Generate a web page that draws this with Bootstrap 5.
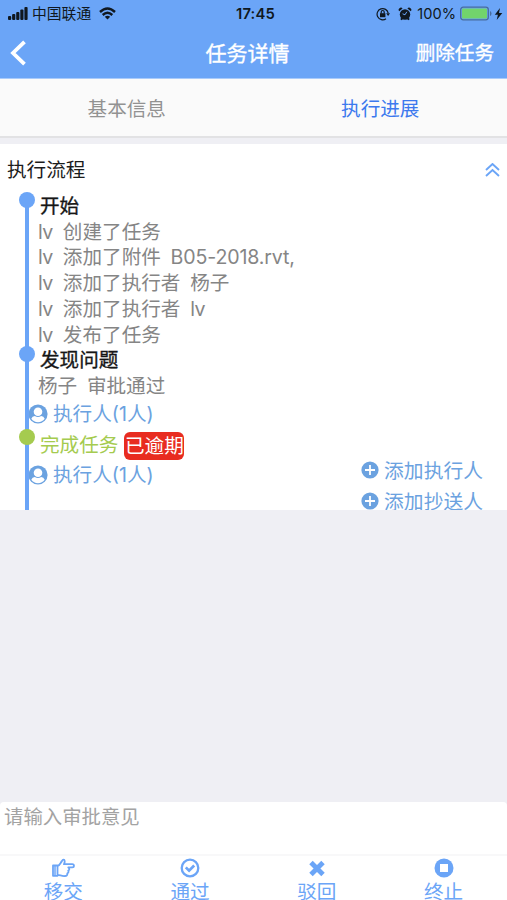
<!DOCTYPE html>
<html lang="zh-CN">
<head>
<meta charset="utf-8">
<meta name="viewport" content="width=device-width, initial-scale=1">
<title>任务详情</title>
<link href="https://cdn.jsdelivr.net/npm/bootstrap@5.3.0/dist/css/bootstrap.min.css" rel="stylesheet">
<style>
  body { font-family: Inter, "Noto Sans CJK SC", sans-serif; font-size: 19.6px; background: #efeff4; height: 900px; overflow: hidden; color: #1c1c1c; }
  svg { display: block; flex: none; }
  .app { height: 900px; }
  .top { background: #6ba5f7; height: 79px; border-bottom: 1px solid #a9cbfb; }
  .status { height: 27px; color: #101820; font-size: 14.8px; line-height: 27px; padding: 0 4px 0 8px; }
  .status > div, .titlebar > div { flex: 1 1 0; }
  .status .clock { padding-top: 2px; letter-spacing: .2px; }
  .carrier { padding-top: 2px; margin-left: 4px; }
  .charge { font-size: 14.6px; margin-left: 5px; padding-top: 1px; }
  .titlebar { height: 51px; line-height: 51px; color: #fff; padding: 1px 13px 0 10px; }
  .titlebar h1 { font-size: 21px; line-height: 51px; font-weight: 400; margin: 0 0 0 -9px; }
  .titlebar, .step { -webkit-text-stroke: .35px currentColor; }
  .tabs { height: 59px; background: #fafafa; border-bottom: 2px solid #e2e2e4; line-height: 59px; color: #929292; }
  .tabs div { padding-top: 1px; }
  .tabs .on { color: #3c79ee; }
  .flow { margin-top: 6px; height: 366px; background: #fff; overflow: hidden; }
  .flow-head { height: 50px; line-height: 50px; padding: 1px 7px 0; }
  .track { padding-left: 38px; line-height: 25.7px; color: #858585; height: 316px; }
  .rail { left: 24.5px; top: 6px; bottom: 0; width: 4px; background: #6ba5f7; }
  .step { color: #161616; padding-left: 2px; }
  .dot { left: -19px; top: -2px; width: 16px; height: 16px; border-radius: 50%; background: #6ba5f7; }
  .green { color: #a5cb4f; height: 31px; padding-top: 2px; -webkit-text-stroke: 0; }
  .green .dot { background: #a5cb4f; top: -1px; }
  .late { background: #e82c20; color: #fff; border-radius: 6px; height: 28px; line-height: 28px; width: 60px; margin-left: 6px; margin-top: -1px; }
  .person { color: #6ba2e0; margin-left: -10px; gap: 5px; height: 30px; }
  .person svg { margin-top: -2px; }
  .adds { right: 24px; top: 261.5px; color: #6ba2e0; line-height: 31px; font-size: 19.8px; }
  .adds svg { margin: -2px 5px 0 0; }
  .line { white-space: pre; word-spacing: 4.2px; }
  .lat { letter-spacing: -.15px; }
  .v { letter-spacing: -.5px; margin-right: .3px; }
  .entry { height: 52px; background: #fff; color: #a3a3a3; line-height: 30px; padding-left: 4px; border-radius: 4px 4px 0 0; font-size: 19.4px; }
  .actions { height: 46px; background: #fff; border-top: 2px solid #f8f8f9; color: #6ba5f7; overflow: hidden; line-height: 28px; }
  .actions svg { margin-top: 2px; }
</style>
</head>
<body>
<div class="app d-flex flex-column">
  <header class="top flex-shrink-0">
    <div class="status d-flex align-items-center">
      <div class="d-flex align-items-center">
        <svg width="20" height="13" viewBox="0 0 20 13" fill="#101820"><rect y="9" width="3.2" height="4" rx="1"/><rect x="4.1" y="7" width="3.2" height="6" rx="1"/><rect x="8.2" y="5" width="3.2" height="8" rx="1"/><rect x="12.3" y="2.5" width="3.2" height="10.500" rx="1"/><rect x="16.400" width="3.2" height="13" rx="1"/></svg>
        <span class="carrier">中国联通</span>
        <svg class="ms-2" width="17" height="13" viewBox="0 0 17 13" fill="none" stroke="#101820" stroke-width="2.4"><path d="M1 5Q8.500-2 16 5M3.700 8Q8.500 3.600 13.300 8"/><path d="M8.500 12.500 5.800 9.800Q8.500 7.600 11.200 9.800z" fill="#101820" stroke="none"/></svg>
      </div>
      <span class="clock fw-semibold">17:45</span>
      <div class="d-flex align-items-center justify-content-end">
        <svg width="14" height="14" viewBox="0 0 14 14" fill="none" stroke="#101820" stroke-width="1.200"><path d="M10 11.700A5.600 5.600 0 1 1 12.200 6.200"/><path d="M10.200 6.200h3.800l-1.900 2.900z" fill="#101820" stroke="none"/><rect x="4" y="6.200" width="5.400" height="4" fill="#101820" stroke="none"/><path d="M5.200 6.500V5a1.500 1.500 0 0 1 3 0v1.500"/></svg>
        <svg class="ms-2" width="14" height="14" viewBox="0 0 14 14"><g fill="#101820"><circle cx="7" cy="7.500" r="5.200"/><path d="M1.200 4.300A2 2 0 0 1 4.600 1.500zM12.800 4.300A2 2 0 0 0 9.400 1.500z"/><path d="m3 10 2 2-1.300 1.300-1.200-.8zM11 10l-2 2 1.300 1.300 1.200-.8z"/></g><path d="m8.800 4.800-1.800 3-2.400-1" fill="none" stroke="#6ba5f7"/></svg>
        <span class="charge">100%</span>
        <svg class="ms-1" width="32" height="15" viewBox="0 0 32 15"><rect x=".7" y="1.200" width="27.600" height="12.600" rx="2.500" fill="none" stroke="#486c9e" stroke-width="1.300"/><rect x="2" y="2.500" width="25" height="10" rx="1" fill="#72d46c"/><path d="M30 5v5q1.500-.5 1.500-2.500T30 5" fill="#486c9e"/></svg>
        <svg style="margin-left:2px" width="9" height="12" viewBox="0 0 9 12"><path d="M6 0 .8 6.800h3.100L2.700 12 8.300 4.900H5z" fill="#101820"/></svg>
      </div>
    </div>
    <div class="titlebar d-flex align-items-center">
      <div><svg width="17" height="26" viewBox="0 0 17 26" fill="none" stroke="#fff" stroke-width="3.800"><path d="M14.500 1.800 3 13l11.500 11.200"/></svg></div>
      <h1>任务详情</h1>
      <div class="text-end">删除任务</div>
    </div>
  </header>
  <nav class="tabs d-flex text-center flex-shrink-0">
    <div class="w-50">基本信息</div>
    <div class="w-50 on">执行进展</div>
  </nav>
  <main class="flow flex-shrink-0">
    <div class="flow-head d-flex justify-content-between align-items-center">
      <span>执行流程</span>
      <svg width="15" height="14" viewBox="0 0 15 14" fill="none" stroke="#6ba5f7" stroke-width="1.900"><path d="m1 7 6.500-6L14 7M1 13l6.500-6 6.500 6"/></svg>
    </div>
    <div class="track position-relative">
      <div class="rail position-absolute"></div>
      <div class="step position-relative"><i class="dot position-absolute"></i>开始</div>
      <div class="line"><span class="v">lv</span> 创建了任务</div>
      <div class="line"><span class="v">lv</span> 添加了附件 <span class="lat">B05-2018.rvt,</span></div>
      <div class="line"><span class="v">lv</span> 添加了执行者 杨子</div>
      <div class="line"><span class="v">lv</span> 添加了执行者 <span class="v">lv</span></div>
      <div class="line"><span class="v">lv</span> 发布了任务</div>
      <div class="step position-relative"><i class="dot position-absolute"></i>发现问题</div>
      <div class="line">杨子 审批通过</div>
      <div class="person d-flex align-items-center">
        <svg width="20" height="20" viewBox="0 0 20 20"><circle cx="10" cy="10" r="9.600" fill="#6ba2e0"/><circle cx="10" cy="7.700" r="4.300" fill="#fff"/><path d="M3.300 14.800q1-2.500 3.500-2.800 3.200 2.200 6.400 0 2.500.3 3.500 2.800-2.500 3.400-6.700 3.400t-6.700-3.400" fill="#fff"/></svg>
        <span>执行人(1人)</span>
      </div>
      <div class="step green position-relative d-flex align-items-center"><i class="dot position-absolute"></i><span>完成任务</span><span class="late text-center">已逾期</span></div>
      <div class="person d-flex align-items-center">
        <svg width="20" height="20" viewBox="0 0 20 20"><circle cx="10" cy="10" r="9.600" fill="#6ba2e0"/><circle cx="10" cy="7.700" r="4.300" fill="#fff"/><path d="M3.300 14.800q1-2.500 3.500-2.800 3.200 2.200 6.400 0 2.500.3 3.500 2.800-2.500 3.400-6.700 3.400t-6.700-3.400" fill="#fff"/></svg>
        <span>执行人(1人)</span>
      </div>
      <div class="adds position-absolute">
        <div class="d-flex align-items-center"><svg width="18" height="18" viewBox="0 0 18 18"><circle cx="9" cy="9" r="8.600" fill="#6ba2e0"/><path d="M9 4v10M4 9h10" stroke="#fff" stroke-width="1.800"/></svg>添加执行人</div>
        <div class="d-flex align-items-center"><svg width="18" height="18" viewBox="0 0 18 18"><circle cx="9" cy="9" r="8.600" fill="#6ba2e0"/><path d="M9 4v10M4 9h10" stroke="#fff" stroke-width="1.800"/></svg>添加抄送人</div>
      </div>
    </div>
  </main>
  <div class="entry mt-auto flex-shrink-0">请输入审批意见</div>
  <footer class="actions d-flex flex-shrink-0">
    <div class="w-25 d-flex flex-column align-items-center"><svg width="23" height="20" viewBox="0 0 23 20" fill="none" stroke="#6ba5f7" stroke-width="1.800" stroke-linejoin="round"><path d="M1 7.500h4.500v10.300H1zM5.500 8C8 7.500 8.500 4.500 10 3c.8-2 2.500-1.600 2.700 0 .2 1.500-.6 2.500-.8 3.200h8.400c2.200 0 2.200 3.200 0 3.200h-4c1.500 1 1.300 2.700-.1 3.200.7 1.200.2 2.300-.9 2.700.3 1.800-.7 2.700-2.300 2.700-3.500.3-4.700-1-7.500-1.100"/><path d="M3 8v9" stroke-width="1.500"/></svg><span>移交</span></div>
    <div class="w-25 d-flex flex-column align-items-center"><svg width="20" height="20" viewBox="0 0 20 20" fill="none" stroke="#6ba5f7"><circle cx="10" cy="10" r="8.300" stroke-width="2.300"/><path d="m5.800 9.400 3.300 3.300 5.100-5.200" stroke-width="2.700"/></svg><span>通过</span></div>
    <div class="w-25 d-flex flex-column align-items-center"><svg width="20" height="20" viewBox="0 0 20 20" fill="none" stroke="#6ba5f7" stroke-width="4.900"><path d="m4 4.500 12 12m0-12-12 12"/></svg><span>驳回</span></div>
    <div class="w-25 d-flex flex-column align-items-center"><svg width="20" height="20" viewBox="0 0 20 20"><circle cx="10" cy="10" r="9.500" fill="#6ba5f7"/><rect x="6" y="6" width="8" height="8" fill="#fff"/></svg><span>终止</span></div>
  </footer>
</div>
<script src="https://cdn.jsdelivr.net/npm/bootstrap@5.3.0/dist/js/bootstrap.bundle.min.js"></script>
</body>
</html>
